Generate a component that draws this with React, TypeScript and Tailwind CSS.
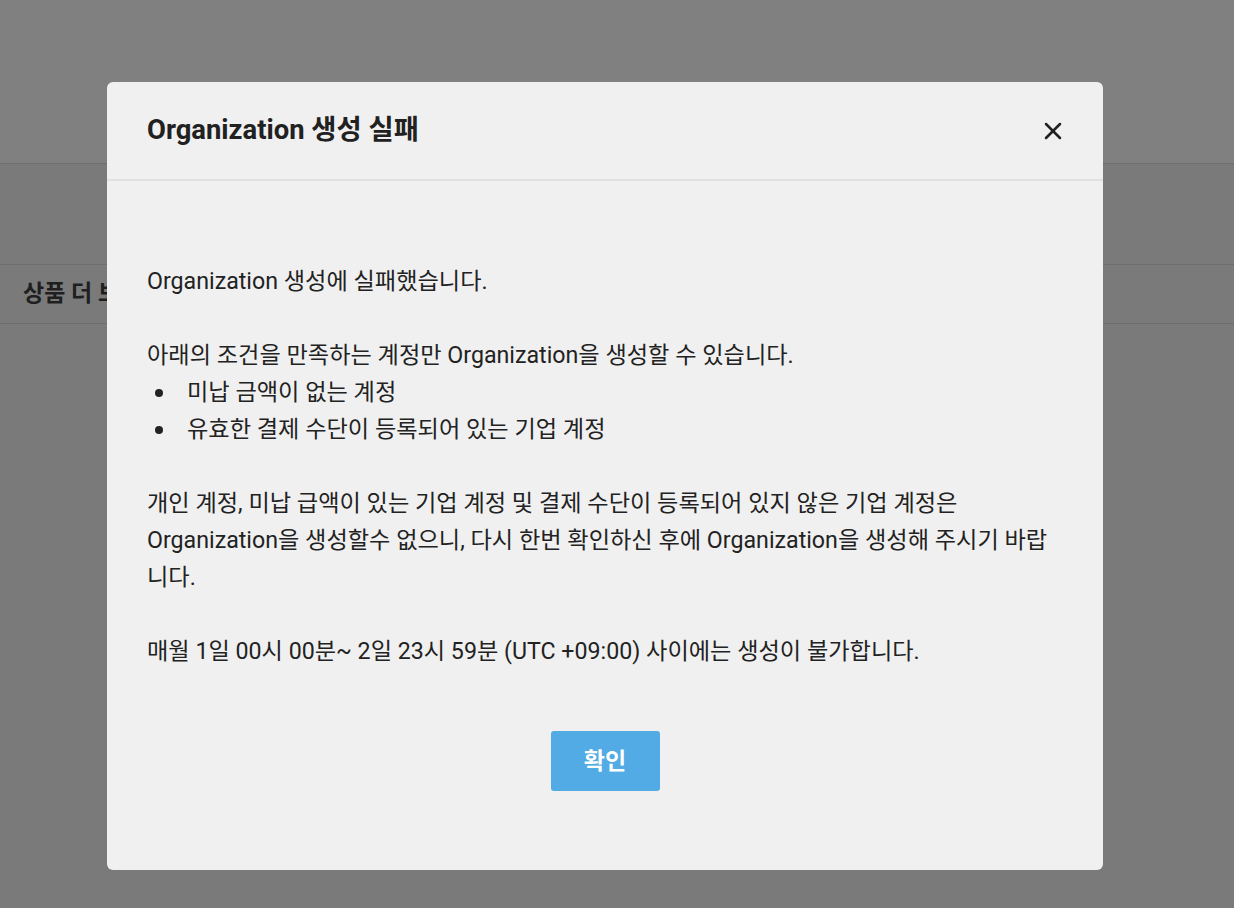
import { X } from 'lucide-react'

const font = { fontFamily: 'Roboto, "Noto Sans CJK KR", sans-serif' }

export default function App() {
  return (
    <div className="relative h-[908px] w-[1234px] overflow-hidden bg-[#7a7a7a]" style={font}>
      {/* dimmed page behind the dialog */}
      <div className="h-[164px] border-b border-[#6e6e6e] bg-[#808080]" />
      <div className="mt-[100px] flex h-[60px] items-center border-y border-[#6e6e6e] pl-[23px]">
        <span className="text-[23px] font-bold text-[#1f1f1f]">상품 더 보기</span>
      </div>

      {/* dialog */}
      <div className="absolute left-[107px] top-[82px] flex w-[996px] flex-col rounded-[6px] bg-[#f0f0f0]">
        <div className="flex h-[99px] items-center justify-between border-b-2 border-[#e1e1e1] pl-[40px] pr-[36px]">
          <h2 className="text-[27.4px] font-bold text-[#212121]">Organization 생성 실패</h2>
          <button className="text-[#212121]">
            <X className="h-[28px] w-[28px]" strokeWidth={2.2} />
          </button>
        </div>

        <div className="px-[40px] pt-[82px] pb-[79px] text-[23.2px] leading-[37px] text-[#222]">
          <p>Organization 생성에 실패했습니다.</p>
          <br />
          <p>아래의 조건을 만족하는 계정만 Organization을 생성할 수 있습니다.</p>
          <ul>
            <li className="flex items-center">
              <span className="flex w-[40px] justify-start pl-[8px]">
                <span className="h-[8px] w-[8px] rounded-full bg-[#222]" />
              </span>
              <span>미납 금액이 없는 계정</span>
            </li>
            <li className="flex items-center">
              <span className="flex w-[40px] justify-start pl-[8px]">
                <span className="h-[8px] w-[8px] rounded-full bg-[#222]" />
              </span>
              <span>유효한 결제 수단이 등록되어 있는 기업 계정</span>
            </li>
          </ul>
          <br />
          <p>
            개인 계정, 미납 급액이 있는 기업 계정 및 결제 수단이 등록되어 있지 않은 기업 계정은
            Organization을 생성할수 없으니, 다시 한번 확인하신 후에 Organization을 생성해 주시기 바랍니다.
          </p>
          <br />
          <p>매월 1일 00시 00분~ 2일 23시 59분 (UTC +09:00) 사이에는 생성이 불가합니다.</p>

          <div className="mt-[61px] flex justify-center">
            <button className="h-[60px] w-[109px] rounded-[3px] bg-[#52abe4] text-[23px] font-bold text-white">
              확인
            </button>
          </div>
        </div>
      </div>
    </div>
  )
}
